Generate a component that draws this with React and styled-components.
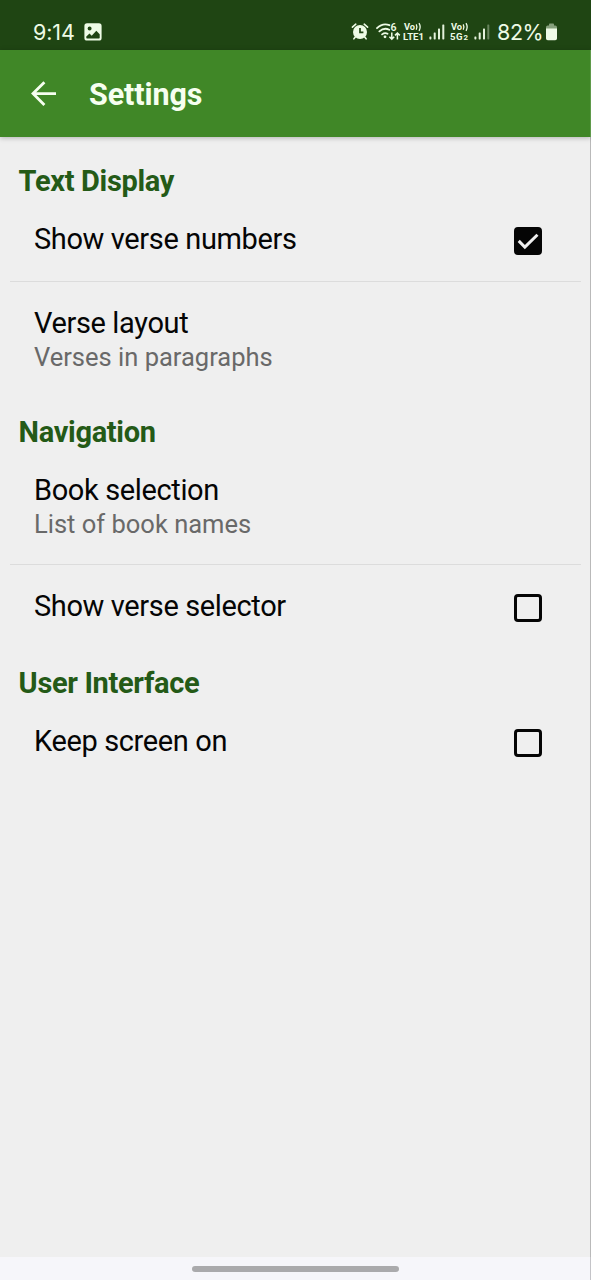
import React, { useState } from "react";
import styled, { createGlobalStyle } from "styled-components";

const GlobalStyle = createGlobalStyle`
  * {
    box-sizing: border-box;
  }

  body {
    margin: 0;
    background-color: #efefef;
    font-family: Roboto, "Liberation Sans", sans-serif;
  }
`;

const Screen = styled.div`
  display: flex;
  flex-direction: column;
  width: 100%;
  height: 1280px;
  background-color: #efefef;
  overflow: hidden;
`;

const StatusBar = styled.div`
  display: flex;
  align-items: flex-start;
  flex-shrink: 0;
  height: 50px;
  padding: 20px 33px 0px 33px;
  background-color: #1f4513;
  color: #eefbe6;
`;

const StatusText = styled.span`
  width: ${({ $width }) => $width}px;
  margin-left: ${({ $gap }) => $gap || 0}px;
  font-family: Inter, Roboto, sans-serif;
  font-size: 21.5px;
  line-height: 24px;
  letter-spacing: ${({ $spacing }) => $spacing}px;
  white-space: nowrap;
`;

const StatusIcon = styled.svg`
  display: block;
  flex-shrink: 0;
  margin-top: ${({ $top }) => $top || 0}px;
  margin-left: ${({ $gap }) => $gap || 0}px;
  fill: currentColor;
  font-family: Roboto, "Liberation Sans", sans-serif;
`;

const Spacer = styled.div`
  flex: 1;
`;

const AppBar = styled.header`
  display: flex;
  align-items: center;
  flex-shrink: 0;
  height: 87px;
  padding: 0px 30px;
  gap: 32px;
  background-color: #408727;
  color: #f6fff0;
  border-right: 1px solid #5f9a4a;
  box-shadow: 0px 1px 5px rgba(0, 0, 0, 0.25);
  z-index: 1;
`;

const BackButton = styled.button`
  display: flex;
  padding: 0;
  border: none;
  background: none;
  color: inherit;
  cursor: pointer;
`;

const Title = styled.h1`
  margin: 2px 0px 0px 0px;
  font-size: 30.5px;
  line-height: 36px;
  font-weight: 700;
  letter-spacing: -0.1px;
`;

const Content = styled.main`
  flex: 1;
  padding: 8.5px 9px 0px 10px;
  border-right: 1px solid #b9b9b9;
`;

const Section = styled.section`
  padding-top: 18.6px;
`;

const SectionTitle = styled.h2`
  margin: 0;
  padding-left: 8.6px;
  font-size: 29px;
  line-height: 34px;
  font-weight: 700;
  color: #245a17;
  letter-spacing: -0.33px;
`;

const Row = styled.div`
  display: flex;
  align-items: flex-start;
  justify-content: space-between;
  padding: 24px 39px ${({ $hasSummary }) => ($hasSummary ? 23 : 24.5)}px 24px;
  cursor: pointer;

  & + & {
    border-top: 1px solid #dcdcdc;
  }
`;

const Label = styled.div`
  font-size: 29px;
  line-height: 34px;
  letter-spacing: -0.37px;
  color: #050505;
`;

const Summary = styled.div`
  font-size: 25.5px;
  line-height: 34px;
  color: #696969;
`;

const Checkbox = styled.span`
  display: flex;
  align-items: center;
  justify-content: center;
  width: 28px;
  height: 28px;
  margin-top: 4.6px;
  border: 3px solid #050505;
  border-radius: 4px;
  background-color: ${({ $checked }) => ($checked ? "#050505" : "transparent")};
`;

const NavigationBar = styled.div`
  display: flex;
  justify-content: center;
  flex-shrink: 0;
  height: 23px;
  padding-top: 9px;
  background-color: #f6f6fa;
  border-right: 1px solid #c4c4c8;
`;

const Handle = styled.div`
  width: 207px;
  height: 6px;
  border-radius: 3px;
  background-color: #aaaaac;
`;

const PictureIcon = () => (
  <StatusIcon $top={3} width="18" height="18" viewBox="0 0 18 18">
    <path
      fillRule="evenodd"
      d="M3 .3h12Q17.6.3 17.6 3v12q0 2.6-2.6 2.6H3Q.4 17.6.4 15V3Q.4.3 3 .3zM5.6 3.4a2 2 0 1 0 0 4 2 2 0 0 0 0-4zM2.3 13.6v1.2q0 .7.7.7h12q.7 0 .7-.7v-3.5l-3.4-3.5-4.6 4.9-2.2-2.2z"
    />
  </StatusIcon>
);

const AlarmIcon = () => (
  <StatusIcon width="18" height="20" viewBox="0 0 18 20">
    <circle cx="9" cy="12" r="7" />
    <path d="M1.4 7.2L4.8 4.2M16.6 7.2L13.2 4.2M4.3 17l-1.4 1.8M13.7 17l1.4 1.8" stroke="currentColor" strokeWidth="1.6" strokeLinecap="round" />
    <path d="M9 8v4.4h3.4" fill="none" stroke="#1f4513" strokeWidth="1.7" />
  </StatusIcon>
);

const WifiIcon = () => (
  <StatusIcon $gap={7} width="25" height="22" viewBox="0 0 25 22">
    <path
      d="M1 8.2Q6.8 2.4 13.4 5.2M3.4 11.4Q8.2 7 13.2 9.8M6.1 14.4Q9 12.2 11.5 13.8"
      fill="none"
      stroke="currentColor"
      strokeWidth="1.8"
      strokeLinecap="round"
    />
    <circle cx="9" cy="16.8" r="1.4" />
    <text x="14.4" y="11" fontSize="10.5" fontWeight="600">6</text>
    <path
      d="M15.8 12.4v6.6M13.4 16.7l2.4 2.4 2.4-2.4M21.4 19.6v-6.4M19 15.4l2.4-2.4 2.4 2.4"
      fill="none"
      stroke="currentColor"
      strokeWidth="1.5"
    />
  </StatusIcon>
);

const VolteIcon = ({ gap, network, sim, width }) => (
  <StatusIcon $gap={gap} width={width} height="22" viewBox={`0 0 ${width} 22`}>
    <text x="1" y="10" fontSize="9.3" fontWeight="700" textLength="11">Vo</text>
    <path
      d="M13.2 4.4q1.5 2.7 0 5.4M16 3.2q2.3 3.8 0 7.6"
      fill="none"
      stroke="currentColor"
      strokeWidth="1.3"
    />
    {sim ? (
      <>
        <text x="0" y="20" fontSize="9.6" fontWeight="700" textLength="12.6">{network}</text>
        <text x="13.4" y="20" fontSize="7.8" fontWeight="700">{sim}</text>
      </>
    ) : (
      <text x="0" y="20" fontSize="9.6" fontWeight="700" textLength="21">{network}</text>
    )}
  </StatusIcon>
);

const SignalIcon = ({ gap, level }) => (
  <StatusIcon $gap={gap} width="16" height="22" viewBox="0 0 16 22">
    {[3, 7, 11, 15].map((height, index) => (
      <rect
        key={height}
        x={0.4 + index * 4.3}
        y={19.4 - height}
        width="2"
        height={height}
        rx="0.6"
        opacity={index < level ? 0.95 : 0.35}
      />
    ))}
  </StatusIcon>
);

const BatteryIcon = () => (
  <StatusIcon $gap={3} width="13" height="22" viewBox="0 0 13 22">
    <path d="M4 5.5V4.4Q4 3.6 4.8 3.6h3.4q.8 0 .8.8v1.1h1.2q1.8 0 1.8 1.8V9H1V7.3q0-1.8 1.8-1.8z" opacity="0.5" />
    <path d="M1 8.4h11v10q0 1.8-1.8 1.8H2.8Q1 20.2 1 18.4z" />
  </StatusIcon>
);

const BackIcon = () => (
  <svg width="27" height="26" viewBox="0 0 27 26" fill="none" stroke="currentColor" strokeWidth="2.8">
    <path d="M26 12.6H3M14.4 1.2L3 12.6 14.4 24" />
  </svg>
);

const CheckIcon = () => (
  <svg width="22" height="22" viewBox="0 0 23 23" fill="none" stroke="#efefef" strokeWidth="3.1">
    <path d="M1.8 11.4l6.4 6.5L21.4 5" />
  </svg>
);

const sections = [
  {
    title: "Text Display",
    items: [
      { id: "verseNumbers", label: "Show verse numbers", checkbox: true },
      { id: "verseLayout", label: "Verse layout", summary: "Verses in paragraphs" },
    ],
  },
  {
    title: "Navigation",
    items: [
      { id: "bookSelection", label: "Book selection", summary: "List of book names" },
      { id: "verseSelector", label: "Show verse selector", checkbox: true },
    ],
  },
  {
    title: "User Interface",
    items: [{ id: "keepScreenOn", label: "Keep screen on", checkbox: true }],
  },
];

function SettingRow({ item, checked, onToggle }) {
  return (
    <Row $hasSummary={!!item.summary} onClick={item.checkbox ? onToggle : undefined}>
      <div>
        <Label>{item.label}</Label>
        {item.summary && <Summary>{item.summary}</Summary>}
      </div>
      {item.checkbox && (
        <Checkbox role="checkbox" aria-checked={checked} aria-label={item.label} $checked={checked}>
          {checked && <CheckIcon />}
        </Checkbox>
      )}
    </Row>
  );
}

function App() {
  const [values, setValues] = useState({ verseNumbers: true });

  const toggle = (id) => setValues((prev) => ({ ...prev, [id]: !prev[id] }));

  return (
    <>
      <GlobalStyle />
      <Screen>
        <StatusBar>
          <StatusText $width={51} $spacing={-0.1}>9:14</StatusText>
          <PictureIcon />
          <Spacer />
          <AlarmIcon />
          <WifiIcon />
          <VolteIcon gap={2} network="LTE1" width={22} />
          <SignalIcon gap={4} level={4} />
          <VolteIcon gap={5} network="5G" sim="2" width={20} />
          <SignalIcon gap={4} level={3} />
          <StatusText $gap={7} $width={45} $spacing={-0.4}>82%</StatusText>
          <BatteryIcon />
        </StatusBar>
        <AppBar>
          <BackButton aria-label="Back">
            <BackIcon />
          </BackButton>
          <Title>Settings</Title>
        </AppBar>
        <Content>
          {sections.map((section) => (
            <Section key={section.title}>
              <SectionTitle>{section.title}</SectionTitle>
              {section.items.map((item) => (
                <SettingRow
                  key={item.id}
                  item={item}
                  checked={!!values[item.id]}
                  onToggle={() => toggle(item.id)}
                />
              ))}
            </Section>
          ))}
        </Content>
        <NavigationBar>
          <Handle />
        </NavigationBar>
      </Screen>
    </>
  );
}

export default App;
